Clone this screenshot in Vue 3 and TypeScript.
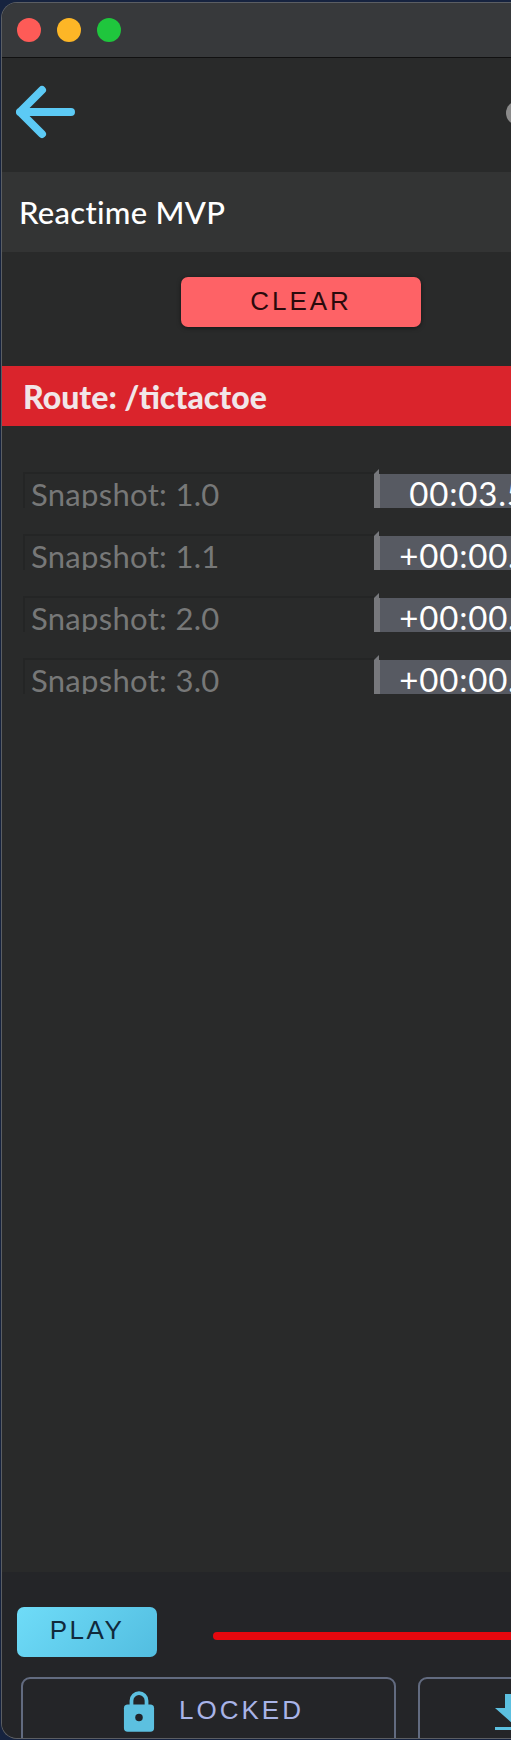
<script setup lang="ts">
interface Snapshot {
  label: string;
  time: string;
}

const snapshots: Snapshot[] = [
  { label: "Snapshot: 1.0", time: "00:03.5" },
  { label: "Snapshot: 1.1", time: "+00:00.1" },
  { label: "Snapshot: 2.0", time: "+00:00.2" },
  { label: "Snapshot: 3.0", time: "+00:00.1" },
];
</script>

<template>
  <div class="page">
    <div class="window">
      <div class="titlebar">
        <span class="dot red"></span>
        <span class="dot yellow"></span>
        <span class="dot green"></span>
      </div>

      <div class="toolbar">
        <svg class="back" width="62" height="56" viewBox="0 0 62 56" fill="none">
          <path
            d="M26 5 L4 27 L26 49 M4 27 H55"
            stroke="#5ccaf5"
            stroke-width="8"
            stroke-linecap="round"
            stroke-linejoin="round"
          />
        </svg>
        <span class="knob"></span>
      </div>

      <div class="app-title">Reactime MVP</div>

      <div class="clear-wrap">
        <button class="clear">CLEAR</button>
      </div>

      <div class="route">Route: /tictactoe</div>

      <div class="snapshots">
        <div v-for="snap in snapshots" :key="snap.label" class="row">
          <div class="snap-name">{{ snap.label }}</div>
          <div class="snap-time">{{ snap.time }}</div>
        </div>
      </div>

      <div class="bottom">
        <div class="play-row">
          <button class="play">PLAY</button>
          <div class="slider"></div>
        </div>
        <div class="actions">
          <button class="action locked">
            <svg width="32" height="42" viewBox="0 0 34 44">
              <path
                d="M9 18 V11 a8 8 0 0 1 16 0 V18"
                fill="none"
                stroke="#5cc0e0"
                stroke-width="4"
              />
              <rect x="1" y="15" width="32" height="29" rx="4" fill="#5cc0e0" />
              <circle cx="17" cy="29" r="4" fill="#20242a" />
            </svg>
            <span>LOCKED</span>
          </button>
          <button class="action download">
            <svg width="36" height="36" viewBox="0 0 36 36">
              <path d="M10 0 H26 V14 H36 L18 30 L0 14 H10 Z" fill="#5cc0e0" />
              <rect x="0" y="33" width="36" height="3" fill="#5cc0e0" />
            </svg>
            <span>DOWNLOAD</span>
          </button>
        </div>
      </div>
    </div>
  </div>
</template>

<style>
html,
body {
  margin: 0;
  background: #16233f;
  overflow: hidden;
}
</style>

<style scoped>
.page {
  width: 511px;
  height: 1740px;
  overflow: hidden;
  padding-top: 2px;
  padding-left: 1px;
  box-sizing: border-box;
}
.window {
  width: 900px;
  height: 1737px;
  display: flex;
  flex-direction: column;
  background: #292a2a;
  border: 1px solid #5b5e63;
  border-right: none;
  border-radius: 16px 0 0 16px;
  overflow: hidden;
  box-sizing: border-box;
  font-family: Lato, "Open Sans", sans-serif;
}
.titlebar {
  height: 55px;
  flex-shrink: 0;
  display: flex;
  align-items: center;
  gap: 16px;
  padding-left: 15px;
  box-sizing: border-box;
  background: #37393b;
  border-bottom: 1px solid #111;
}
.dot {
  width: 24px;
  height: 24px;
  border-radius: 50%;
}
.red {
  background: #fe5b57;
}
.yellow {
  background: #fdb626;
}
.green {
  background: #1fc63d;
}
.toolbar {
  height: 114px;
  flex-shrink: 0;
  display: flex;
  align-items: center;
  padding-left: 14px;
  padding-bottom: 4px;
  box-sizing: border-box;
}
.back {
  display: block;
}
.knob {
  width: 24px;
  height: 24px;
  border-radius: 50%;
  background: #8a8a8a;
  margin-left: 428px;
}
.app-title {
  height: 80px;
  flex-shrink: 0;
  display: flex;
  align-items: center;
  padding-left: 17px;
  background: #333434;
  color: #fff;
  font-size: 31px;
  font-weight: 500;
  letter-spacing: 0.3px;
}
.clear-wrap {
  height: 114px;
  flex-shrink: 0;
  padding: 25px 0 0 179px;
  box-sizing: border-box;
}
.clear {
  display: block;
  width: 240px;
  height: 50px;
  padding: 0 0 2px;
  border: none;
  border-radius: 7px;
  background: #fe6266;
  color: #2a0a0c;
  font-family: "Liberation Sans", Arial, sans-serif;
  font-size: 26px;
  letter-spacing: 3px;
  box-shadow: 0 1px 4px rgba(0, 0, 0, 0.5);
}
.route {
  height: 60px;
  flex-shrink: 0;
  display: flex;
  align-items: center;
  padding-left: 21px;
  background: #da242c;
  color: #f1e6e8;
  font-size: 32px;
  font-weight: 900;
}
.snapshots {
  flex: 1;
  display: flex;
  flex-direction: column;
  gap: 26px;
  padding: 46px 0 0 21px;
}
.row {
  display: flex;
  height: 36px;
  position: relative;
}
/* little bevel tip sticking up from the time cell */
.row::after {
  content: "";
  position: absolute;
  left: 351px;
  top: -3px;
  width: 5px;
  height: 5px;
  background: #77787c;
  clip-path: polygon(0 100%, 100% 0, 100% 100%);
}
.snap-name {
  width: 351px;
  height: 36px;
  padding-left: 6px;
  box-sizing: border-box;
  overflow: hidden;
  border-top: 2px solid #242525;
  border-left: 2px solid #242525;
  color: #777878;
  font-size: 31px;
  letter-spacing: 0.3px;
  line-height: 41px;
  white-space: nowrap;
}
.snap-time {
  height: 34px;
  margin-top: 2px;
  width: 182px;
  box-sizing: border-box;
  overflow: hidden;
  border-left: 6px solid #77787c;
  background: #575a62;
  color: #fff;
  font-size: 33px;
  letter-spacing: 0.8px;
  line-height: 38px;
  text-align: center;
  white-space: nowrap;
}
.bottom {
  height: 166px;
  flex-shrink: 0;
  background: #242528;
  padding: 35px 0 0 15px;
  box-sizing: border-box;
}
.play-row {
  display: flex;
}
.play {
  width: 140px;
  height: 50px;
  padding: 0 0 3px;
  border: none;
  border-radius: 7px;
  background: linear-gradient(135deg, #6fdcf8, #52bde0);
  color: #102a3c;
  font-family: "Liberation Sans", Arial, sans-serif;
  font-size: 26px;
  letter-spacing: 2.5px;
}
.slider {
  width: 600px;
  height: 8px;
  margin: 25px 0 0 56px;
  border-radius: 4px;
  background: #e6080e;
}
.actions {
  display: flex;
  gap: 22px;
  margin: 20px 0 0 4px;
}
.action {
  width: 375px;
  height: 80px;
  flex-shrink: 0;
  display: flex;
  gap: 24px;
  padding: 11px 0 0 100px;
  box-sizing: border-box;
  border: 2px solid #626b80;
  border-radius: 9px;
  background: transparent;
  color: #a9b4e8;
  font-family: "Liberation Sans", Arial, sans-serif;
  font-size: 26px;
  letter-spacing: 3px;
}
.action span {
  margin-top: 5px;
}
.action svg {
  display: block;
  flex-shrink: 0;
}
.download {
  padding-left: 75px;
  padding-top: 15px;
}
</style>
